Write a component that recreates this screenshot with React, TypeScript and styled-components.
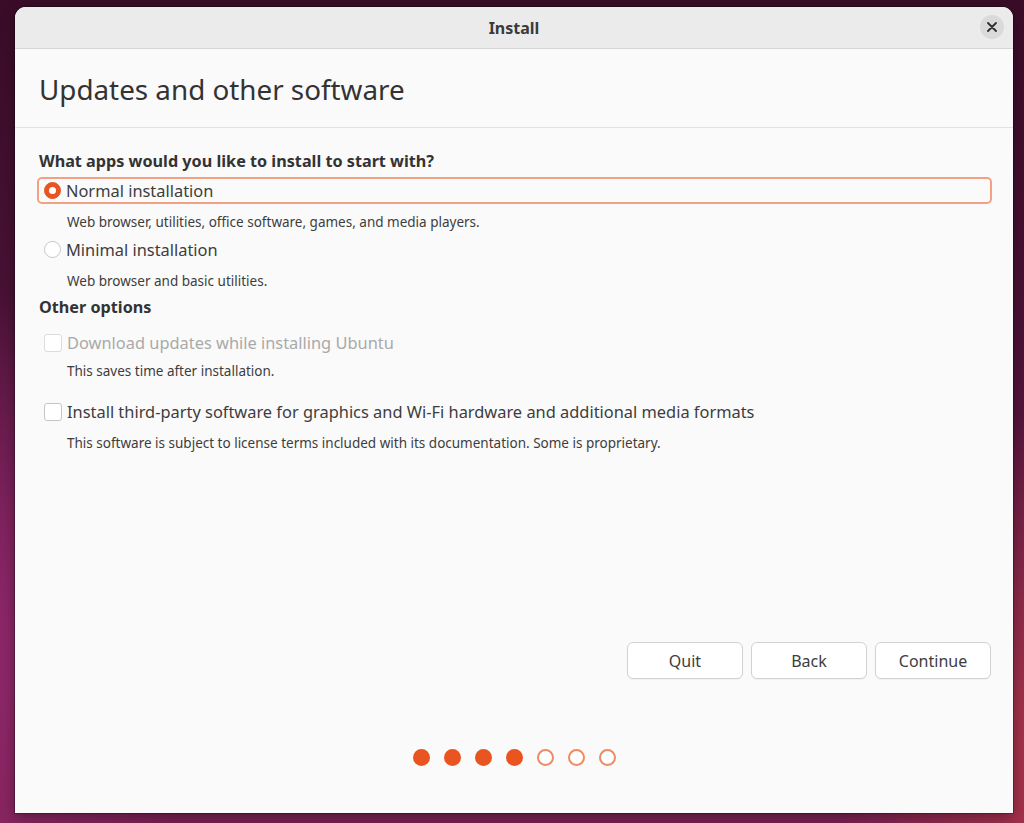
import styled, { createGlobalStyle } from 'styled-components';

const GlobalStyle = createGlobalStyle`
  html, body {
    margin: 0;
    padding: 0;
    height: 100%;
  }
  body {
    font-family: 'Noto Sans', 'Open Sans', sans-serif;
    color: #3d3d3d;
    overflow: hidden;
  }
`;

const Desktop = styled.div`
  width: 1024px;
  height: 823px;
  box-sizing: border-box;
  padding: 7px 11px 10px 15px;
  background:
    radial-gradient(ellipse 420px 520px at -80px 640px, rgba(160, 45, 120, 0.85), transparent 70%),
    radial-gradient(ellipse 380px 520px at 1100px 760px, rgba(190, 60, 70, 0.9), transparent 70%),
    linear-gradient(180deg, #3a0c28 0%, #4a1236 40%, #6a1c4c 75%, #7a2052 100%);
`;

const Window = styled.div`
  width: 998px;
  height: 806px;
  display: flex;
  flex-direction: column;
  background: #fafafa;
  border-radius: 11px 11px 0 0;
  overflow: hidden;
  box-shadow: 0 0 0 1px rgba(0, 0, 0, 0.25), 0 4px 14px rgba(0, 0, 0, 0.35);
`;

const TitleBar = styled.div`
  height: 41px;
  flex: none;
  display: flex;
  align-items: center;
  justify-content: center;
  position: relative;
  background: #ebebeb;
  border-bottom: 1px solid #d6d6d6;
`;

const Title = styled.span`
  font-size: 16px;
  font-weight: 700;
  color: #3a3a3a;
`;

const CloseButton = styled.button`
  position: absolute;
  right: 9px;
  top: 8px;
  width: 24px;
  height: 24px;
  border: none;
  border-radius: 50%;
  background: #dadada;
  display: flex;
  align-items: center;
  justify-content: center;
  padding: 0;
`;

const Header = styled.div`
  height: 79px;
  flex: none;
  display: flex;
  align-items: center;
  padding: 2px 24px 0;
  box-sizing: border-box;
  border-bottom: 1px solid #e2e2e2;
`;

const Heading = styled.h1`
  margin: 0;
  font-size: 27.8px;
  font-weight: 400;
  color: #333;
`;

const Content = styled.div`
  flex: 1;
  display: flex;
  flex-direction: column;
  padding: 23px 23px 0 24px;
`;

const SectionTitle = styled.div<{ $gap?: number }>`
  margin-top: ${(p) => p.$gap ?? 0}px;
  font-size: 16.2px;
  line-height: 20px;
  font-weight: 700;
  color: #333;
`;

const OptionRow = styled.div<{ $focused?: boolean; $gap: number; $disabled?: boolean }>`
  margin: ${(p) => p.$gap}px -2px 0;
  height: 27px;
  box-sizing: border-box;
  display: flex;
  align-items: center;
  gap: 5px;
  padding-left: 5px;
  border: 2px solid ${(p) => (p.$focused ? '#f4a083' : 'transparent')};
  border-radius: 5px;
  font-size: 16.4px;
  color: ${(p) => (p.$disabled ? '#a9a9a9' : '#3d3d3d')};
`;

const Radio = styled.span<{ $checked?: boolean }>`
  width: 17px;
  height: 17px;
  flex: none;
  box-sizing: border-box;
  border-radius: 50%;
  display: flex;
  align-items: center;
  justify-content: center;
  background: ${(p) => (p.$checked ? '#e95420' : '#fff')};
  border: 1px solid ${(p) => (p.$checked ? '#e95420' : '#c6c6c6')};

  &::after {
    content: '';
    display: ${(p) => (p.$checked ? 'block' : 'none')};
    width: 7px;
    height: 7px;
    border-radius: 50%;
    background: #fff;
  }
`;

const Checkbox = styled.span<{ $disabled?: boolean }>`
  width: 18px;
  height: 18px;
  flex: none;
  box-sizing: border-box;
  border-radius: 3px;
  background: #fff;
  border: 1px solid ${(p) => (p.$disabled ? '#dcdcdc' : '#c6c6c6')};
`;

const Description = styled.div<{ $gap: number }>`
  margin-top: ${(p) => p.$gap}px;
  padding-left: 28px;
  font-size: 13.5px;
  line-height: 18px;
  color: #3d3d3d;
`;

const Spacer = styled.div`
  flex: 1;
`;

const ButtonRow = styled.div`
  display: flex;
  justify-content: flex-end;
  gap: 8px;
  margin-right: -1px;
`;

const Button = styled.button`
  width: 116px;
  height: 37px;
  border: 1px solid #d2d2d2;
  border-radius: 6px;
  background: #fff;
  font-family: inherit;
  font-size: 16px;
  color: #3d3d3d;
  box-shadow: 0 1px 1px rgba(0, 0, 0, 0.04);
`;

const Steps = styled.div`
  display: flex;
  justify-content: center;
  gap: 14px;
  margin: 70px 0 47px;
`;

const Dot = styled.span<{ $done?: boolean }>`
  width: 17px;
  height: 17px;
  box-sizing: border-box;
  border-radius: 50%;
  background: ${(p) => (p.$done ? '#e95420' : '#fff')};
  border: 2px solid ${(p) => (p.$done ? '#e95420' : '#ef8a62')};
`;

const steps = [true, true, true, true, false, false, false];

export default function App() {
  return (
    <Desktop>
      <GlobalStyle />
      <Window>
        <TitleBar>
          <Title>Install</Title>
          <CloseButton aria-label="Close">
            <svg width="10" height="10" viewBox="0 0 10 10">
              <path d="M1 1 L9 9 M9 1 L1 9" stroke="#2e2e2e" strokeWidth="1.8" strokeLinecap="round" />
            </svg>
          </CloseButton>
        </TitleBar>
        <Header>
          <Heading>Updates and other software</Heading>
        </Header>
        <Content>
          <SectionTitle>What apps would you like to install to start with?</SectionTitle>
          <OptionRow $focused $gap={6}>
            <Radio $checked />
            Normal installation
          </OptionRow>
          <Description $gap={9}>
            Web browser, utilities, office software, games, and media players.
          </Description>
          <OptionRow $gap={5}>
            <Radio />
            Minimal installation
          </OptionRow>
          <Description $gap={9}>Web browser and basic utilities.</Description>

          <SectionTitle $gap={7}>Other options</SectionTitle>
          <OptionRow $gap={12} $disabled>
            <Checkbox $disabled />
            Download updates while installing Ubuntu
          </OptionRow>
          <Description $gap={6}>This saves time after installation.</Description>
          <OptionRow $gap={18}>
            <Checkbox />
            Install third-party software for graphics and Wi-Fi hardware and additional media formats
          </OptionRow>
          <Description $gap={9}>
            This software is subject to license terms included with its documentation. Some is proprietary.
          </Description>

          <Spacer />
          <ButtonRow>
            <Button>Quit</Button>
            <Button>Back</Button>
            <Button>Continue</Button>
          </ButtonRow>
          <Steps>
            {steps.map((done, i) => (
              <Dot key={i} $done={done} />
            ))}
          </Steps>
        </Content>
      </Window>
    </Desktop>
  );
}
